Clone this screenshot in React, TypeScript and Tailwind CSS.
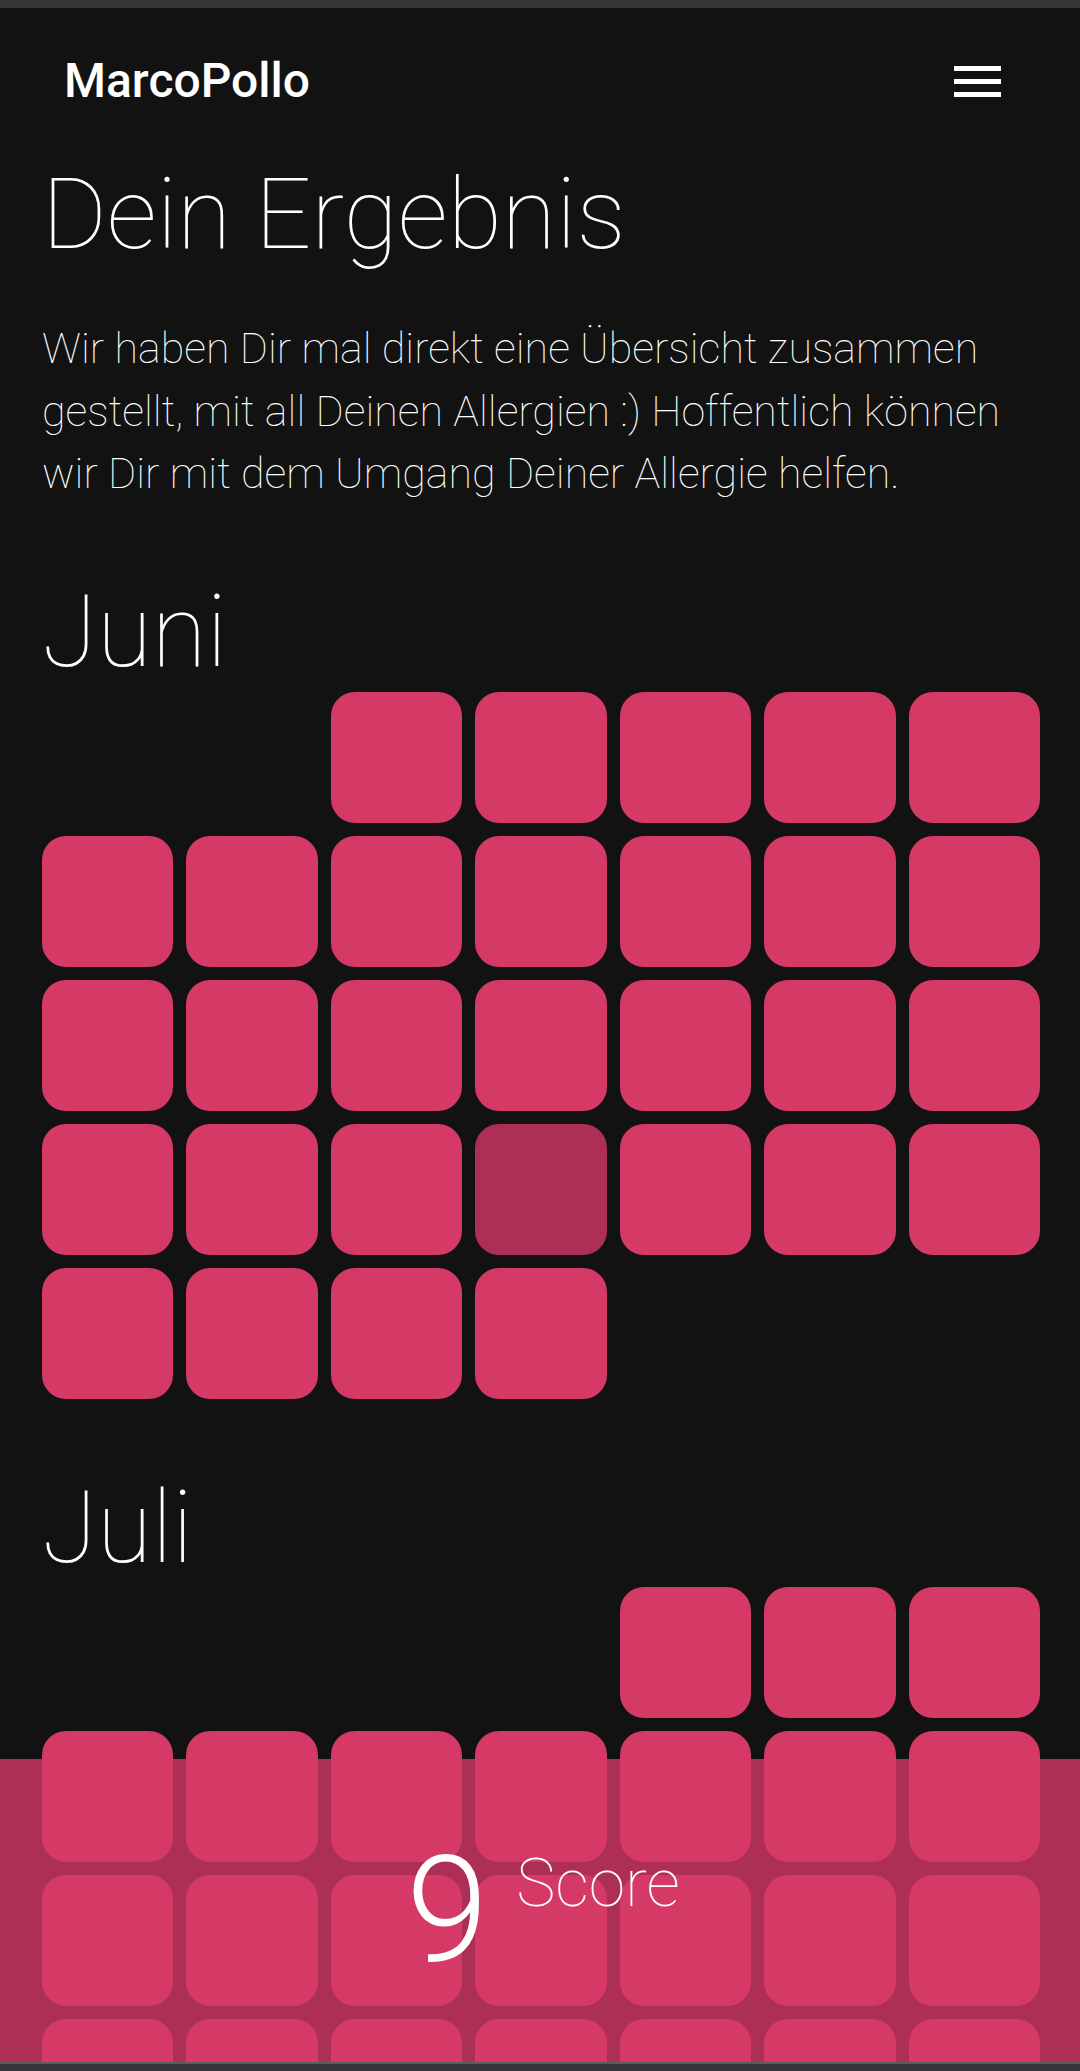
import React from "react";

const Tile = ({ dark = false, start = "" }: { dark?: boolean; start?: string }) => (
  <div
    className={
      (dark ? "bg-[#ae2f55] " : "bg-[#d43a65] ") +
      "h-[131px] rounded-[24px] " +
      start
    }
  />
);

function Month({
  name,
  days,
  startClass,
  darkDays,
  headMt,
  gridMt,
}: {
  name: string;
  days: number;
  startClass: string;
  darkDays: number[];
  headMt: string;
  gridMt: string;
}) {
  const list = Array.from({ length: days }, (_, i) => i + 1);
  return (
    <section>
      <h2 className={"text-[100px] font-thin leading-none text-white " + headMt}>{name}</h2>
      <div className={"grid grid-cols-7 gap-[13px] " + gridMt}>
        {list.map((d) => (
          <Tile key={d} dark={darkDays.includes(d)} start={d === 1 ? startClass : ""} />
        ))}
      </div>
    </section>
  );
}

export default function App() {
  return (
    <div className="relative h-[2071px] overflow-hidden bg-[#121212] font-['Roboto',sans-serif] text-white">
      <div className="h-[8px] bg-[#36373b]" />
      <header className="flex h-[146px] items-center justify-between pl-[64px] pr-[79px]">
        <span className="text-[48px] font-medium leading-none">MarcoPollo</span>
        <div className="flex w-[47px] flex-col gap-[8px]">
          <div className="h-[5px] bg-white" />
          <div className="h-[5px] bg-white" />
          <div className="h-[5px] bg-white" />
        </div>
      </header>

      <div className="absolute left-0 right-0 top-[1759px] h-[303px] bg-[#ae2f55]" />

      <main className="relative z-10 pl-[42px] pr-[40px]">
        <h1 className="mt-[10px] text-[99px] font-thin leading-[100px]">Dein Ergebnis</h1>
        <p className="mt-[53px] text-[43px] font-thin leading-[62.5px] text-white">
          Wir haben Dir mal direkt eine Übersicht zusammen gestellt, mit all Deinen Allergien :) Hoffentlich können wir Dir mit dem Umgang Deiner Allergie helfen.
        </p>
        <Month name="Juni" days={30} startClass="col-start-3" darkDays={[23]} headMt="mt-[77px]" gridMt="mt-[10px]" />
        <Month name="Juli" days={31} startClass="col-start-5" darkDays={[]} headMt="mt-[79px]" gridMt="mt-[9px]" />
      </main>

      <div className="absolute left-0 right-0 top-[1837px] z-20 flex justify-center pl-[6px]">
        <span className="text-[148px] font-light leading-none">9</span>
        <span className="ml-[28px] mt-[14px] text-[66px] font-thin leading-none">Score</span>
      </div>

      <div className="absolute bottom-0 left-0 right-0 z-30 h-[9px] border-t-2 border-[#5a5b5f] bg-[#36373b]" />
    </div>
  );
}
